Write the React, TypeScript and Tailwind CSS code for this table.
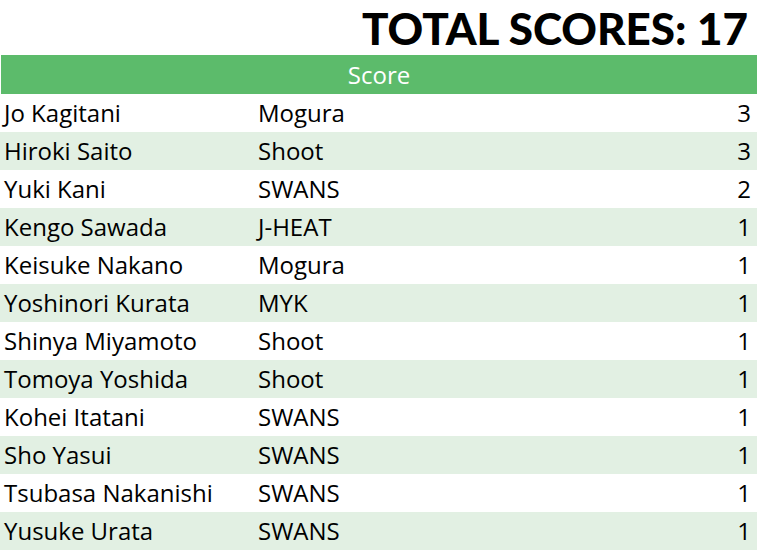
const rows: [string, string, number][] = [
  ["Jo Kagitani", "Mogura", 3],
  ["Hiroki Saito", "Shoot", 3],
  ["Yuki Kani", "SWANS", 2],
  ["Kengo Sawada", "J-HEAT", 1],
  ["Keisuke Nakano", "Mogura", 1],
  ["Yoshinori Kurata", "MYK", 1],
  ["Shinya Miyamoto", "Shoot", 1],
  ["Tomoya Yoshida", "Shoot", 1],
  ["Kohei Itatani", "SWANS", 1],
  ["Sho Yasui", "SWANS", 1],
  ["Tsubasa Nakanishi", "SWANS", 1],
  ["Yusuke Urata", "SWANS", 1],
];

export default function App() {
  return (
    <div className="w-[757px] h-[550px] bg-white overflow-hidden font-['Open_Sans',sans-serif] text-black">
      <div className="h-[55px] flex items-center justify-end pr-[9px]">
        <h1 className="text-[44px] leading-none font-black font-['Lato',sans-serif]">
          TOTAL SCORES: 17
        </h1>
      </div>
      <div className="ml-px h-[39px] bg-[#5cbb6b] text-white text-[24px] leading-none flex items-center justify-center">
        Score
      </div>
      {rows.map(([name, team, score], i) => (
        <div
          key={name}
          className={
            "h-[38px] flex items-center text-[24px] leading-none " +
            (i % 2 === 1 ? "bg-[#e2f0e3]" : "bg-white")
          }
        >
          <div className="w-[258px] pl-[4px]">{name}</div>
          <div className="flex-1">{team}</div>
          <div className="pr-[6px]">{score}</div>
        </div>
      ))}
    </div>
  );
}
